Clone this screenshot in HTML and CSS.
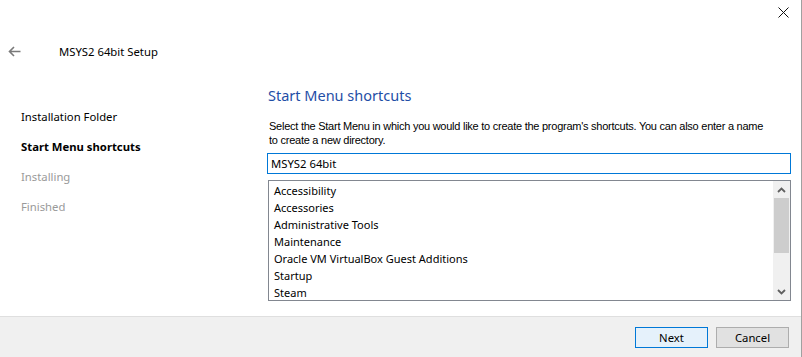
FILE: index.html
```html
<!DOCTYPE html>
<html lang="en">
<head>
    <meta charset="UTF-8">
    <title>MSYS2 64bit Setup</title>
    <link rel="stylesheet" href="styles.css">
</head>
<body>
    <div class="window">
        <div class="titlebar">
            <span class="close">
                <svg width="11" height="11" viewBox="0 0 11 11"><path d="M0.5 0.5L10.5 10.5M10.5 0.5L0.5 10.5" stroke="#111" stroke-width="1"/></svg>
            </span>
        </div>
        <div class="header">
            <span class="back">
                <svg width="13" height="11" viewBox="0 0 13 11"><path d="M12.5 5.5H1.5M6 1L1.5 5.5L6 10" stroke="#7a7a7a" stroke-width="1.6" fill="none"/></svg>
            </span>
            <span class="title">MSYS2 64bit Setup</span>
        </div>
        <div class="body">
            <!-- 步骤 -->
            <ul class="steps">
                <li>Installation Folder</li>
                <li class="current">Start Menu shortcuts</li>
                <li class="todo">Installing</li>
                <li class="todo">Finished</li>
            </ul>
            <div class="page">
                <h1>Start Menu shortcuts</h1>
                <p class="desc">Select the Start Menu in which you would like to create the program's shortcuts. You can also enter a name to create a new directory.</p>
                <input type="text" class="folder" value="MSYS2 64bit">
                <div class="listbox">
                    <ul class="items">
                        <li>Accessibility</li>
                        <li>Accessories</li>
                        <li>Administrative Tools</li>
                        <li>Maintenance</li>
                        <li>Oracle VM VirtualBox Guest Additions</li>
                        <li>Startup</li>
                        <li>Steam</li>
                    </ul>
                    <div class="scrollbar">
                        <span class="arrow">
                            <svg width="9" height="6" viewBox="0 0 9 6"><path d="M1 5L4.5 1.5L8 5" stroke="#606060" stroke-width="1.8" fill="none"/></svg>
                        </span>
                        <span class="thumb"></span>
                        <span class="track"></span>
                        <span class="arrow">
                            <svg width="9" height="6" viewBox="0 0 9 6"><path d="M1 1L4.5 4.5L8 1" stroke="#606060" stroke-width="1.8" fill="none"/></svg>
                        </span>
                    </div>
                </div>
            </div>
        </div>
        <div class="footer">
            <button class="btn primary">Next</button>
            <button class="btn">Cancel</button>
        </div>
    </div>
</body>
</html>
```

FILE: styles.css
```css
body {
    margin: 0;
    background: #fff;
    font-family: "Noto Sans", "Open Sans", sans-serif;
    font-size: 11.3px;
    color: #000;
}
.window {
    width: 801px;
    height: 357px;
    border-right: 1px solid #a0a0a0;
    display: flex;
    flex-direction: column;
    background: #fff;
}
.titlebar {
    height: 26px;
    display: flex;
    justify-content: flex-end;
    align-items: center;
    padding-right: 12px;
}
.close {
    display: flex;
    margin-top: -2px;
}
.header {
    height: 50px;
    display: flex;
    align-items: center;
}
.back {
    display: flex;
    margin-left: 8px;
    width: 51px;
}
.title {
    font-size: 11.3px;
}
.body {
    flex: 1;
    display: flex;
}
.steps {
    list-style: none;
    margin: 0;
    padding: 26px 0 0 21px;
    width: 246px;
}
.steps li {
    height: 30px;
    line-height: 30px;
}
.steps .current {
    font-weight: bold;
}
.steps .todo {
    color: #9a9a9a;
}
.page {
    width: 524px;
    padding-top: 9px;
}
h1 {
    margin: 0 0 0 1px;
    font-size: 14.5px;
    font-weight: normal;
    line-height: 20px;
    color: #1f4ea6;
}
.desc {
    max-width: 505px;
    margin: 14px 0 6px 2px;
    font-family: "Liberation Sans", Arial, sans-serif;
    font-size: 11px;
    letter-spacing: -0.25px;
    line-height: 14px;
}
.folder {
    display: block;
    box-sizing: border-box;
    width: 524px;
    height: 21px;
    margin: 0;
    padding: 0 3px;
    border: 1px solid #0078d7;
    font-family: "Noto Sans", sans-serif;
    font-size: 11.3px;
    outline: none;
}
.listbox {
    margin-top: 6px;
    margin-left: 1px;
    height: 121px;
    box-sizing: border-box;
    border: 1px solid #828790;
    display: flex;
}
.items {
    flex: 1;
    list-style: none;
    margin: 0;
    padding: 1px 0 0 5px;
    overflow: hidden;
    font-size: 11px;
}
.items li {
    height: 17px;
    line-height: 17px;
    white-space: nowrap;
}
.scrollbar {
    width: 17px;
    background: #f0f0f0;
    display: flex;
    flex-direction: column;
}
.arrow {
    height: 17px;
    display: flex;
    align-items: center;
    justify-content: center;
}
.thumb {
    height: 55px;
    margin: 0 1px;
    background: #cdcdcd;
}
.track {
    flex: 1;
}
.footer {
    height: 41px;
    border-top: 1px solid #dfdfdf;
    background: #f0f0f0;
    display: flex;
    justify-content: flex-end;
    align-items: flex-start;
    gap: 8px;
    padding: 10px 12px 0 0;
    box-sizing: border-box;
}
.btn {
    width: 73px;
    height: 21px;
    margin: 0;
    padding: 0;
    border: 1px solid #adadad;
    background: #e1e1e1;
    font-family: "Noto Sans", sans-serif;
    font-size: 11.3px;
    color: #000;
}
.btn.primary {
    border-color: #0078d7;
    background: #e5f1fb;
}
```
